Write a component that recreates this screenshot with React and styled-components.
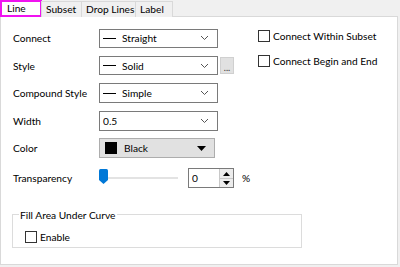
import React from 'react'
import styled, { createGlobalStyle } from 'styled-components'

const GlobalStyle = createGlobalStyle`
  html, body {
    margin: 0;
    padding: 0;
    background: #f0f0f0;
    font-family: Lato, "Noto Sans", "Liberation Sans", sans-serif;
    font-size: 10.2px;
    color: #000;
  }
`

const Window = styled.div`
  width: 400px;
  height: 267px;
  box-sizing: border-box;
  padding: 0 2px 2px 0;
  display: flex;
  flex-direction: column;
`

const TabBar = styled.div`
  display: flex;
  align-items: flex-end;
  height: 17px;
  position: relative;
  z-index: 1;
`

const Tab = styled.div`
  box-sizing: border-box;
  height: ${p => (p.$active ? '17px' : '16px')};
  padding: 0 ${p => (p.$active ? '5px' : '4px')};
  width: ${p => p.$w}px;
  display: flex;
  align-items: center;
  white-space: nowrap;
  background: ${p => (p.$active ? '#fff' : '#f0f0f0')};
  border: ${p => (p.$active ? '2px solid #f013f0' : '1px solid #d9d9d9')};
  border-bottom: ${p => (p.$active ? '2px solid #f013f0' : 'none')};
  margin-left: ${p => (p.$active ? '0' : '-1px')};
  line-height: 1;
`

const Panel = styled.div`
  flex: 1;
  background: #fff;
  border: 1px solid #d9d9d9;
  margin-top: -1px;
  display: flex;
  flex-direction: column;
  padding: 11px 0 0 12px;
`

const Top = styled.div`
  display: flex;
`

const Form = styled.div`
  display: grid;
  grid-template-columns: 86px auto;
  grid-auto-rows: 20px;
  row-gap: 7.6px;
  width: 245px;
`

const Label = styled.div`
  display: flex;
  align-items: center;
  white-space: nowrap;
  margin-top: ${p => p.$mt || 0}px;
`

const Control = styled.div`
  display: flex;
  align-items: center;
  gap: 2px;
  margin-top: ${p => p.$mt || 0}px;
`

const Select = styled.div`
  box-sizing: border-box;
  height: ${p => p.$h || 20}px;
  border: 1px solid ${p => (p.$flat ? '#adadad' : '#7a7a7a')};
  background: ${p => (p.$flat ? '#e1e1e1' : '#fff')};
  display: flex;
  align-items: center;
  padding: 0 8px 0 3px;
  width: ${p => p.$w || 119}px;
`

const Dash = styled.span`
  width: 13px;
  height: 1px;
  background: #000;
  margin-right: 6px;
`

const Swatch = styled.span`
  width: 12px;
  height: 12px;
  background: #000;
  margin: 0 7px 0 2px;
`

const Value = styled.span`
  flex: 1;
`

const EllipsisButton = styled.div`
  box-sizing: border-box;
  width: 14px;
  height: 17px;
  background: #e1e1e1;
  border: 1px solid #d0d0d0;
  display: flex;
  align-items: flex-end;
  justify-content: center;
  font-size: 9px;
  line-height: 11px;
  color: #333;
`

const Slider = styled.div`
  width: 79px;
  height: 20px;
  position: relative;
  display: flex;
  align-items: center;
  margin-right: 8px;
`

const Track = styled.div`
  margin-left: 8px;
  flex: 1;
  height: 2px;
  background: #e3e3e3;
`

const Thumb = styled.svg`
  position: absolute;
  left: 0;
  top: 1px;
`

const Spin = styled.div`
  box-sizing: border-box;
  width: 46px;
  height: 20px;
  border: 1px solid #7a7a7a;
  display: flex;
`

const SpinInput = styled.div`
  flex: 1;
  padding-left: 3px;
  display: flex;
  align-items: center;
`

const SpinButtons = styled.div`
  width: 13px;
  display: flex;
  flex-direction: column;
  border-left: 1px solid #c8c8c8;
`

const SpinButton = styled.div`
  flex: 1;
  background: #ececec;
  display: flex;
  align-items: center;
  justify-content: center;
  & + & { border-top: 1px solid #c8c8c8; }
`

const Percent = styled.span`
  margin-left: 6px;
`

const Side = styled.div`
  display: flex;
  flex-direction: column;
  gap: 11px;
  padding-top: 1px;
`

const Check = styled.label`
  display: flex;
  align-items: center;
  height: 14px;
  gap: 3px;
  white-space: nowrap;
`

const Box = styled.span`
  box-sizing: border-box;
  width: 12px;
  height: 12px;
  border: 1px solid #333;
  background: #fff;
`

const Group = styled.fieldset`
  width: 290px;
  box-sizing: border-box;
  height: 39px;
  margin: 23px 0 0 -1px;
  padding: 9px 0 0 12px;
  border: 1px solid #dcdcdc;
  legend {
    padding: 0 1px;
    margin-left: -6px;
    line-height: 12px;
  }
`

const Chevron = () => (
  <svg width="9" height="6" viewBox="0 0 9 6">
    <path d="M1 1l3.5 3.5L8 1" fill="none" stroke="#555" strokeWidth="1" />
  </svg>
)

const Caret = () => (
  <svg width="9" height="5" viewBox="0 0 9 5">
    <path d="M0 0h9L4.5 5z" fill="#000" />
  </svg>
)

const Tri = ({ up }) => (
  <svg width="7" height="4" viewBox="0 0 7 4">
    <path d={up ? 'M0 4h7L3.5 0z' : 'M0 0h7L3.5 4z'} fill="#000" />
  </svg>
)

export default function App() {
  return (
    <>
      <GlobalStyle />
      <Window>
        <TabBar>
          <Tab $active $w={42}>Line</Tab>
          <Tab $w={41}>Subset</Tab>
          <Tab $w={55}>Drop Lines</Tab>
          <Tab $w={38}>Label</Tab>
        </TabBar>
        <Panel>
          <Top>
            <Form>
              <Label>Connect</Label>
              <Control>
                <Select $h={19}><Dash /><Value>Straight</Value><Chevron /></Select>
              </Control>
              <Label>Style</Label>
              <Control>
                <Select $h={19}><Dash /><Value>Solid</Value><Chevron /></Select>
                <EllipsisButton>...</EllipsisButton>
              </Control>
              <Label>Compound Style</Label>
              <Control>
                <Select><Dash /><Value>Simple</Value><Chevron /></Select>
              </Control>
              <Label>Width</Label>
              <Control>
                <Select><Value>0.5</Value><Chevron /></Select>
              </Control>
              <Label>Color</Label>
              <Control>
                <Select $flat $w={116}><Swatch /><Value>Black</Value><Caret /></Select>
              </Control>
              <Label $mt={5}>Transparency</Label>
              <Control $mt={5}>
                <Slider>
                  <Track />
                  <Thumb width="9" height="15" viewBox="0 0 9 15">
                    <path d="M0 1.5Q0 0 1.5 0h6Q9 0 9 1.5V11l-4.5 4L0 11z" fill="#0078d7" />
                  </Thumb>
                </Slider>
                <Spin>
                  <SpinInput>0</SpinInput>
                  <SpinButtons>
                    <SpinButton><Tri up /></SpinButton>
                    <SpinButton><Tri /></SpinButton>
                  </SpinButtons>
                </Spin>
                <Percent>%</Percent>
              </Control>
            </Form>
            <Side>
              <Check><Box />Connect Within Subset</Check>
              <Check><Box />Connect Begin and End</Check>
            </Side>
          </Top>
          <Group>
            <legend>Fill Area Under Curve</legend>
            <Check><Box />Enable</Check>
          </Group>
        </Panel>
      </Window>
    </>
  )
}
